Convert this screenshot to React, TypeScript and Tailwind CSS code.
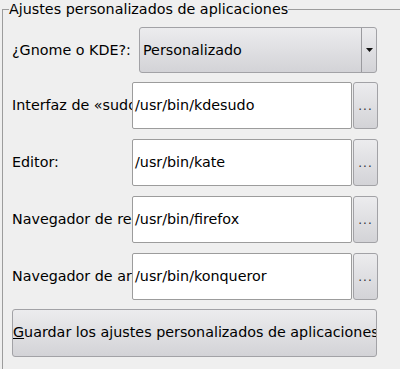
import React from "react";

const paths = [
  { label: "Interfaz de «sudo»:", value: "/usr/bin/kdesudo" },
  { label: "Editor:", value: "/usr/bin/kate" },
  { label: "Navegador de red:", value: "/usr/bin/firefox" },
  { label: "Navegador de archivos:", value: "/usr/bin/konqueror" },
];

function PathRow({ label, value }: { label: string; value: string }) {
  return (
    <div className="flex items-stretch h-[47px]">
      <div className="w-[120px] flex items-center overflow-hidden whitespace-nowrap pt-[1px]">{label}</div>
      <div className="w-[220px] flex items-center bg-white border border-[#9c9c9c] rounded-[2px] pl-[2px] pt-[1px] overflow-hidden whitespace-nowrap">
        {value}
      </div>
      <button className="w-[25px] ml-[1px] flex items-center justify-center border border-[#a2a2a6] rounded-[3px] bg-gradient-to-b from-[#ececee] to-[#d3d3d7] text-[#333] text-[12px] pt-[1px] tracking-[1px]">
        ...
      </button>
    </div>
  );
}

export default function App() {
  return (
    <div className="w-[400px] h-[369px] bg-[#efefef] overflow-hidden text-[14.3px] text-black font-['DejaVu_Sans',sans-serif]">
      <fieldset className="ml-[2px] border-t border-l border-[#9c9c9c] h-[400px] p-0 m-0">
        <legend className="ml-[6px] leading-[18px] px-0">Ajustes personalizados de aplicaciones</legend>
        <div className="pl-[9px] flex flex-col">
          {/* Combo */}
          <div className="flex items-stretch h-[46px] mt-[9px]">
            <div className="w-[127px] flex items-center whitespace-nowrap pt-[1px]">¿Gnome o KDE?:</div>
            <div className="w-[238px] flex items-stretch border border-[#a2a2a6] rounded-[3px] bg-gradient-to-b from-[#ececee] to-[#d3d3d7]">
              <div className="flex-1 flex items-center pl-[3px] pt-[1px]">Personalizado</div>
              <div className="w-[15px] border-l border-[#9a9a9e] flex items-center justify-center">
                <svg width="7" height="4" viewBox="0 0 7 4">
                  <path d="M0 0h7L3.5 4z" fill="#111" />
                </svg>
              </div>
            </div>
          </div>

          <div className="flex flex-col gap-[10px] mt-[9px]">
            {paths.map((p) => (
              <PathRow key={p.value} label={p.label} value={p.value} />
            ))}
          </div>

          <button className="mt-[9px] w-[365px] h-[48px] flex items-center border border-[#a2a2a6] rounded-[3px] bg-gradient-to-b from-[#ececee] to-[#d3d3d7] overflow-hidden whitespace-nowrap text-left">
            <span>
              <span className="underline">G</span>uardar los ajustes personalizados de aplicaciones
            </span>
          </button>
        </div>
      </fieldset>
    </div>
  );
}
